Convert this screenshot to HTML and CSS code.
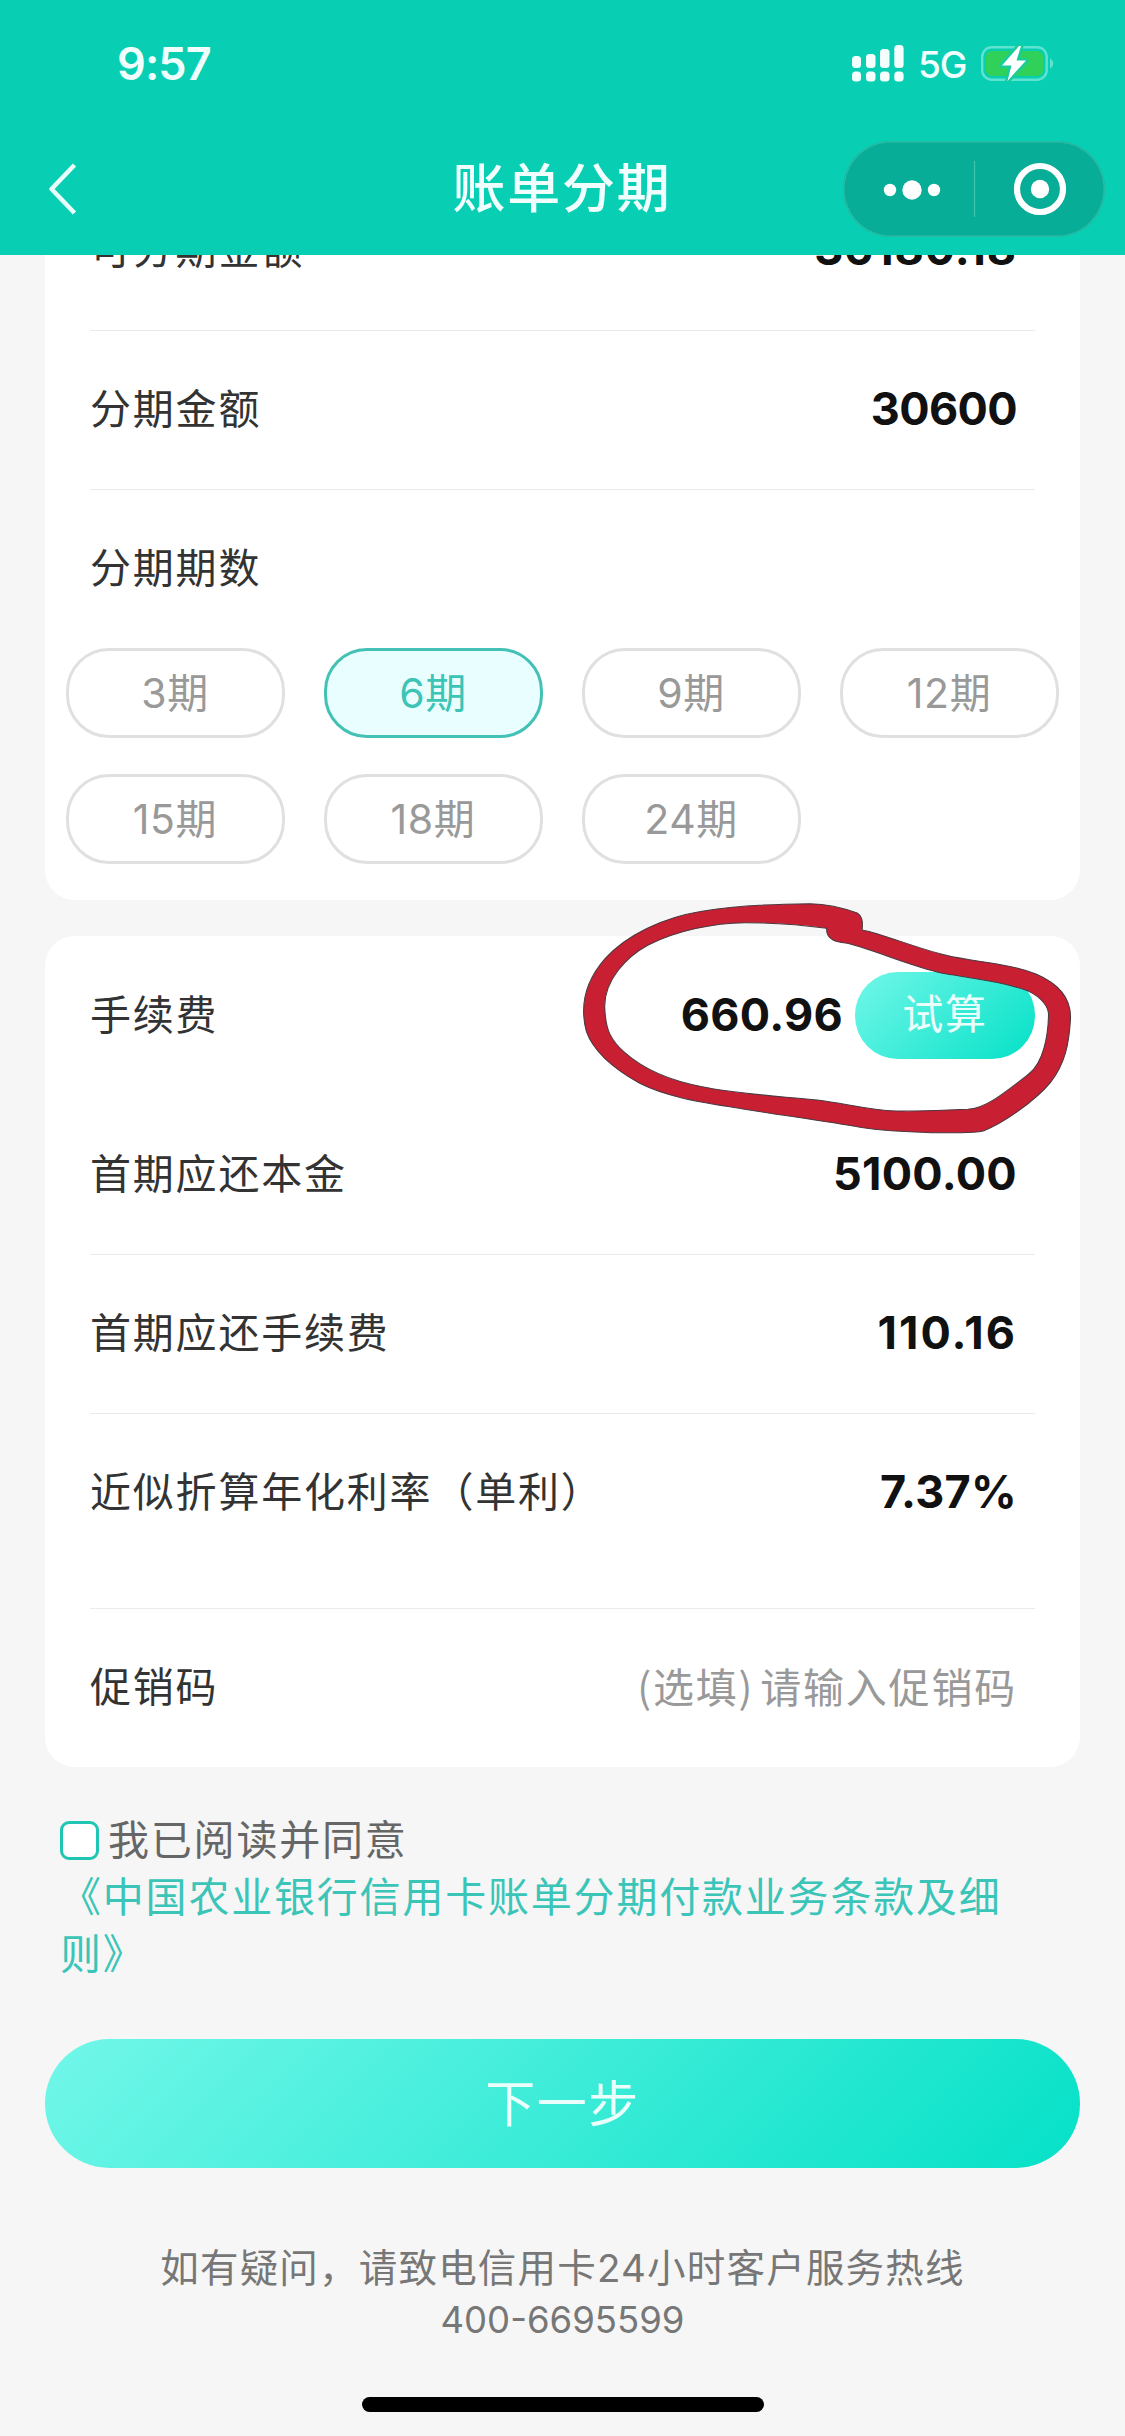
FILE: index.html
```html
<!DOCTYPE html>
<html lang="zh-CN">
<head>
<meta charset="utf-8">
<title>账单分期</title>
<link rel="stylesheet" href="styles.css">
</head>
<body>
<div class="screen">
  <header class="header">
    <div class="status">
      <span class="time">9:57</span>
      <div class="indicators">
        <svg class="signal" width="52" height="37" viewBox="0 0 52 37" fill="#f4fffd">
          <rect x="0" y="11" width="9" height="12" rx="3.5"/><rect x="14" y="9" width="9.500" height="14" rx="3.500"/>
          <rect x="28" y="4" width="9.500" height="19" rx="3.500"/><rect x="42.300" y="0" width="9.300" height="23" rx="3.500"/>
          <rect x="0" y="26.500" width="9" height="10" rx="3.500"/><rect x="14" y="26.500" width="9.500" height="10" rx="3.500"/>
          <rect x="28" y="26.500" width="9.500" height="10" rx="3.500"/><rect x="42.300" y="26.500" width="9.300" height="10" rx="3.500"/>
        </svg>
        <span class="network">5G</span>
        <svg class="battery" width="73" height="37" viewBox="0 0 73 37">
          <rect x="1.200" y="2.200" width="64.500" height="32.500" rx="9.500" fill="none" stroke="#5fe3ce" stroke-width="2.400"/>
          <rect x="5" y="6" width="57" height="25" rx="5.500" fill="#30d158"/>
          <path d="M69 13.500c2 1 3.200 2.700 3.200 5s-1.200 4-3.200 5z" fill="#5fe3ce"/>
          <path d="M38 1 L21 20.500 H30.500 L26.500 36 L45 15.500 H35.500 L40 1z" fill="#fff" stroke="#18cc9c" stroke-width="5" paint-order="stroke" stroke-linejoin="round"/>
        </svg>
      </div>
    </div>
    <div class="navbar">
      <svg class="back" width="30" height="54" viewBox="0 0 30 54"><path d="M27.500 3 L4.500 27 L27.500 51" fill="none" stroke="#eafffc" stroke-width="4.500" stroke-linejoin="round"/></svg>
      <h1 class="title">账单分期</h1>
      <div class="capsule">
        <svg width="262" height="96" viewBox="0 0 262 96">
          <g fill="#fff"><circle cx="47" cy="49" r="6.200"/><circle cx="69" cy="49" r="9.700"/><circle cx="91" cy="49" r="6.200"/><circle cx="197" cy="48" r="9.200"/></g>
          <circle cx="197" cy="48" r="23" fill="none" stroke="#fff" stroke-width="6.200"/>
          <path d="M131.500 20v56" stroke="#45c2af" stroke-width="1.200"/>
        </svg>
      </div>
    </div>
  </header>

  <main class="content">
    <section class="card card-top">
      <div class="row row-first"><span class="label">可分期金额</span><span class="value loose">36180.18</span></div>
      <div class="row"><span class="label">分期金额</span><span class="value tight">30600</span></div>
      <div class="row row-last"><span class="label">分期期数</span></div>
      <div class="periods">
        <span class="pill">3期</span><span class="pill active">6期</span><span class="pill">9期</span><span class="pill">12期</span>
        <span class="pill">15期</span><span class="pill">18期</span><span class="pill">24期</span>
      </div>
    </section>

    <section class="card card-fee">
      <div class="row row-fee"><span class="label">手续费</span><span class="value">660.96</span><span class="calc">试算</span></div>
      <div class="row"><span class="label">首期应还本金</span><span class="value">5100.00</span></div>
      <div class="row"><span class="label">首期应还手续费</span><span class="value looser">110.16</span></div>
      <div class="row row-rate"><span class="label">近似折算年化利率（单利）</span><span class="value">7.37%</span></div>
      <div class="row row-last"><span class="label">促销码</span><span class="placeholder"><span class="optional">(选填)</span>请输入促销码</span></div>
      <svg class="marker" width="563" height="400" viewBox="0 0 1568 1200" preserveAspectRatio="none">
        <path fill="#c91f32" fill-rule="evenodd" stroke="#4b3940" stroke-width="3" d="M690 41 C740 42 790 56 822 69 C836 78 838 92 836 120 C900 134 980 172 1070 196 C1150 217 1240 218 1320 252 C1385 282 1420 325 1416 390 C1412 460 1402 520 1360 578 C1320 630 1230 700 1175 722 C1150 730 1100 728 1030 728 C960 726 890 722 830 712 C740 694 600 674 500 656 C400 638 300 625 215 579 C150 540 90 490 68 425 C48 345 68 270 120 206 C180 135 280 83 390 64 C480 47 600 42 690 41Z M737 115 C660 103 590 98 510 98 C420 99 320 122 240 165 C180 200 118 270 119 350 C121 420 135 450 175 488 C230 540 300 572 390 590 C490 612 600 618 710 630 C790 640 850 660 930 663 C1010 665 1080 659 1130 658 C1180 654 1225 615 1300 552 C1340 518 1354 440 1355 374 C1355 350 1335 322 1300 304 C1240 278 1150 266 1060 250 C970 228 880 184 795 160 C775 157 735 155 737 115Z"/>
      </svg>
    </section>

    <section class="agreement">
      <div class="agree-line"><span class="checkbox"></span><span>我已阅读并同意</span></div>
      <div class="terms">《中国农业银行信用卡账单分期付款业务条款及细则》</div>
    </section>

    <div class="next">下一步</div>

    <footer class="hotline"><div>如有疑问，请致电信用卡24小时客户服务热线</div><div class="phone">400-6695599</div></footer>
    <div class="home-bar"></div>
  </main>
</div>
</body>
</html>
```
FILE: styles.css
```css
* { box-sizing: border-box; }
body { margin: 0; background: #f6f6f6; font-family: Inter, "Noto Sans CJK SC", sans-serif; font-size: 41px; letter-spacing: 1.8px; color: #333; }
svg { display: block; }
.screen { width: 1125px; height: 2436px; overflow: hidden; display: flex; flex-direction: column; }

.header { height: 255px; flex: none; background: #08cfb3; color: #f0fffd; }
.status { height: 127px; padding: 0 71px 0 117px; display: flex; justify-content: space-between; align-items: center; }
.time { font-size: 45px; font-weight: 600; letter-spacing: -0.9px; }
.indicators { display: flex; align-items: center; }
.network { width: 77px; padding-left: 14px; padding-top: 3px; font-size: 37px; font-weight: 450; letter-spacing: -1px; line-height: 40px; }
.navbar { height: 124px; padding: 0 20px 0 47px; display: grid; grid-template-columns: 234px 1fr 262px; align-items: center; }
.title { margin: 0; text-align: center; font-size: 53px; font-weight: 500; letter-spacing: 1.8px; line-height: 70px; }
.capsule { height: 96px; border-radius: 48px; background: #07ad97; box-shadow: inset 0 0 0 1.5px #2abba6; }

.content { flex: 1; min-height: 0; overflow: hidden; padding: 0 45px; }
.card { background: #fff; border-radius: 30px; }
.card-top { height: 729px; margin-top: -84px; }
.row { height: 159px; margin: 0 45px; padding: 0 18px 3px 0; border-bottom: 1.5px solid #ebebeb; display: flex; justify-content: space-between; align-items: center; }
.row-first { height: 160px; }
.row-last { height: 158px; border-bottom: 0; }
.label { line-height: 60px; white-space: nowrap; }
.value { color: #111; font-size: 45px; font-weight: 650; letter-spacing: 0.3px; line-height: 60px; }
.tight { letter-spacing: -0.6px; }
.loose { letter-spacing: 0.9px; }
.looser { letter-spacing: 2px; }
.periods { padding: 0 21px; display: grid; grid-template-columns: repeat(4, 219px); column-gap: 39px; row-gap: 36px; }
.pill { height: 90px; border: 3px solid #e0e0e0; border-radius: 43px; display: flex; align-items: center; justify-content: center; color: #999; line-height: 60px; letter-spacing: 0.6px; padding-right: 1px; }
.active { background: #e9ffff; border-color: #42c1b4; color: #3cc4b6; }

.card-fee { position: relative; height: 831px; margin-top: 36px; }
.row-fee { height: 160px; border-bottom: 0; padding-right: 0; }
.row-fee .value { margin-left: auto; margin-right: 12px; }
.calc { width: 180px; height: 87px; margin-top: 2px; border-radius: 43px; background: linear-gradient(135deg, #72f7e9, #05e1c7); color: #eafffc; display: flex; align-items: center; justify-content: center; line-height: 60px; padding-bottom: 3px; }
.row-rate { height: 195px; padding-bottom: 39px; }
.placeholder { color: #999; line-height: 60px; }
.optional { margin-right: 6px; font-family: "Noto Sans CJK SC", sans-serif; }
/* hand-drawn ring lying over the fee row and the gap above it */
.marker { position: absolute; left: 517px; top: -46px; }

.agreement { padding: 44.5px 15px 0; line-height: 57px; }
.agree-line { display: flex; align-items: center; gap: 9px; color: #666; }
.checkbox { width: 39px; height: 39px; border: 3px solid #1fc6b3; border-radius: 9px; background: #fff; }
.terms { color: #3ac5b8; line-break: strict; }

.next { height: 129px; margin-top: 56.5px; padding-bottom: 8px; border-radius: 64.5px; background: linear-gradient(135deg, #72f7e9, #05e1c7); color: #eafffc; display: flex; align-items: center; justify-content: center; font-size: 50px; letter-spacing: 1.5px; }
.hotline { margin-top: 75px; text-align: center; font-size: 38.5px; line-height: 51.5px; letter-spacing: 1.2px; color: #777; }
.phone { font-size: 36.5px; letter-spacing: 0; }
.home-bar { width: 402px; height: 15px; margin: 51px auto 0; border-radius: 8px; background: #000; }
```
